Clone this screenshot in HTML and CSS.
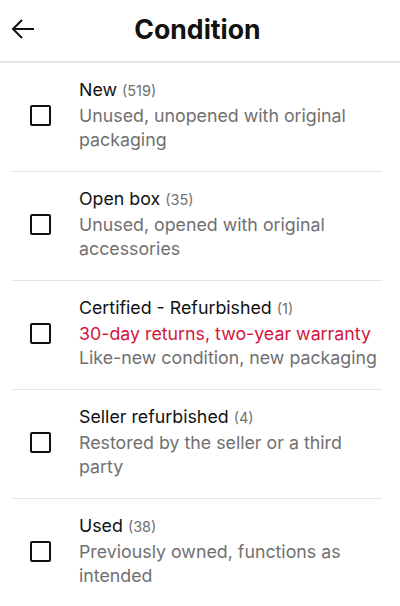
FILE: index.html
```html
<!DOCTYPE html>
<html>
<head>
<meta charset="utf-8">
<link rel="stylesheet" href="styles.css">
</head>
<body>
<header class="topbar">
  <button class="back" aria-label="Back">
    <svg width="24" height="22" viewBox="0 0 24 22"><path d="M23 11H2M11 2L2 11l9 9" fill="none" stroke="#111" stroke-width="2" stroke-linejoin="miter"/></svg>
  </button>
  <h1 class="title">Condition</h1>
  <span></span>
</header>
<ul class="options">
  <li class="option">
    <span class="box"></span>
    <div class="text">
      <div class="name">New <span class="count">(519)</span></div>
      <div class="desc">Unused, unopened with original packaging</div>
    </div>
  </li>
  <li class="option">
    <span class="box"></span>
    <div class="text">
      <div class="name">Open box <span class="count">(35)</span></div>
      <div class="desc">Unused, opened with original accessories</div>
    </div>
  </li>
  <li class="option">
    <span class="box"></span>
    <div class="text">
      <div class="name">Certified - Refurbished <span class="count">(1)</span></div>
      <div class="promo">30-day returns, two-year warranty</div>
      <div class="desc">Like-new condition, new packaging</div>
    </div>
  </li>
  <li class="option">
    <span class="box"></span>
    <div class="text">
      <div class="name">Seller refurbished <span class="count">(4)</span></div>
      <div class="desc">Restored by the seller or a third party</div>
    </div>
  </li>
  <li class="option">
    <span class="box"></span>
    <div class="text">
      <div class="name">Used <span class="count">(38)</span></div>
      <div class="desc">Previously owned, functions as intended</div>
    </div>
  </li>
</ul>
</body>
</html>
```
FILE: styles.css
```css
* { box-sizing: border-box; }
html, body { margin: 0; padding: 0; background: #fff; }
body {
  font-family: Inter, "Liberation Sans", sans-serif;
  color: #111;
  width: 400px;
  overflow: hidden;
}
.topbar {
  height: 63px;
  display: grid;
  grid-template-columns: 1fr auto 1fr;
  align-items: center;
  border-bottom: 2px solid #e5e5e5;
}
.back {
  justify-self: start;
  background: none;
  border: 0;
  padding: 0;
  margin-left: 11px;
  margin-top: -3px;
  display: flex;
}
.title {
  margin: 0 5px 4px 0;
  font-size: 26.6px;
  font-weight: 700;
  letter-spacing: 0;
}
.options {
  list-style: none;
  margin: 0 18px 0 12px;
  padding: 0;
}
.option {
  display: flex;
  align-items: center;
  padding: 16px 0 19px 18px;
  border-bottom: 1px solid #e5e5e5;
  height: 109px;
}
.box {
  flex: none;
  width: 21px;
  height: 21px;
  border: 2px solid #111;
  border-radius: 2px;
  margin-right: 28px;
}
.text {
  font-size: 17.8px;
  line-height: 24.5px;
}
.name { color: #111; }
.count { font-size: 14.5px; color: #707070; }
.desc { color: #707070; }
.promo { color: #d1163d; }
```
